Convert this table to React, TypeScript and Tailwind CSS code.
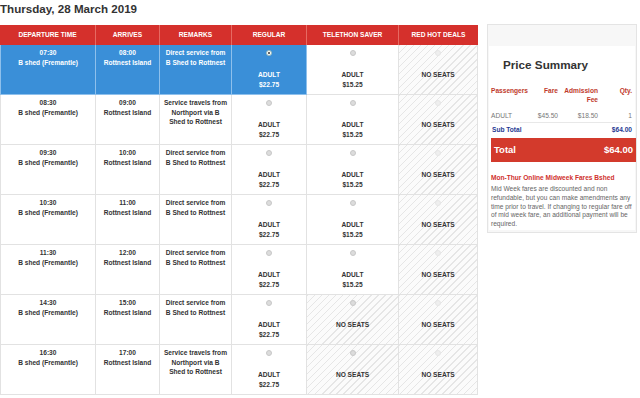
const direct = ['Direct service from', 'B Shed to Rottnest'];
const northport = ['Service travels from', 'Northport via B', 'Shed to Rottnest'];

type Trip = {
  dep: string;
  arr: string;
  remarks: string[];
  telethon: boolean;
  selected?: boolean;
};

const trips: Trip[] = [
  { dep: '07:30', arr: '08:00', remarks: direct, telethon: true, selected: true },
  { dep: '08:30', arr: '09:00', remarks: northport, telethon: true },
  { dep: '09:30', arr: '10:00', remarks: direct, telethon: true },
  { dep: '10:30', arr: '11:00', remarks: direct, telethon: true },
  { dep: '11:30', arr: '12:00', remarks: direct, telethon: true },
  { dep: '14:30', arr: '15:00', remarks: direct, telethon: false },
  { dep: '16:30', arr: '17:00', remarks: northport, telethon: false },
];

const hatch =
  'bg-[#fbfbfb] bg-[repeating-linear-gradient(135deg,#e6e6e6_0px,#e6e6e6_1px,transparent_1px,transparent_5px)]';

const Radio = ({ kind }: { kind: 'on' | 'off' | 'faint' }) => {
  if (kind === 'on')
    return (
      <span className="flex h-[6px] w-[6px] items-center justify-center rounded-full border border-[#9bb] bg-white">
        <span className="h-[2px] w-[2px] rounded-full bg-[#333]" />
      </span>
    );
  if (kind === 'faint')
    return <span className="h-[6px] w-[6px] rounded-full border border-[#e6e6e6] bg-[#efefef]" />;
  return <span className="h-[6px] w-[6px] rounded-full border border-[#c8c8c8] bg-[#dcdcdc]" />;
};

const FareCell = ({ children, radio, className }: { children: React.ReactNode; radio: 'on' | 'off' | 'faint'; className: string }) => (
  <div className={`flex flex-col items-center pt-[5px] ${className}`}>
    <Radio kind={radio} />
    <div className="mt-[14px] text-center">{children}</div>
  </div>
);

const cellBorder = 'border-r border-b border-[#e2e2e2]';

const TripRow = ({ t }: { t: Trip }) => {
  const sel = t.selected;
  const base = sel ? 'bg-[#3a8fd8] text-white border-r border-b border-[#8ec0ec]' : `bg-white text-[#333] ${cellBorder}`;
  return (
    <>
      <div className={`pt-[3px] text-center ${base} border-l`}>
        <div>{t.dep}</div>
        <div>B shed (Fremantle)</div>
      </div>
      <div className={`pt-[3px] text-center ${base}`}>
        <div>{t.arr}</div>
        <div>Rottnest Island</div>
      </div>
      <div className={`pt-[3px] text-center ${base}`}>
        {t.remarks.map((r) => (
          <div key={r} className="whitespace-nowrap">
            {r}
          </div>
        ))}
      </div>
      <FareCell radio={sel ? 'on' : 'off'} className={base}>
        <div>ADULT</div>
        <div>$22.75</div>
      </FareCell>
      {t.telethon ? (
        <FareCell radio="off" className={`bg-white text-[#333] ${cellBorder}`}>
          <div>ADULT</div>
          <div>$15.25</div>
        </FareCell>
      ) : (
        <FareCell radio="off" className={`${hatch} text-[#333] ${cellBorder}`}>
          <div>NO SEATS</div>
        </FareCell>
      )}
      <FareCell radio="faint" className={`${hatch} text-[#333] ${cellBorder}`}>
        <div>NO SEATS</div>
      </FareCell>
    </>
  );
};

const headers = ['DEPARTURE TIME', 'ARRIVES', 'REMARKS', 'REGULAR', 'TELETHON SAVER', 'RED HOT DEALS'];

const PriceSummary = () => (
  <div className="ml-[9px] mt-[24px] h-[209px] w-[150px] border border-[#e4e4e4] bg-[#f7f7f7] px-[1px] pb-[2px] pt-[21px]">
    <div className="h-full bg-white">
      <div className="pl-[14px] pt-[11px] text-[11.7px] font-bold leading-[16px] text-[#333]">Price Summary</div>
      <div className="mt-[13px] grid grid-cols-[1fr_26px_40px_34px] px-[2px] pr-[3px] text-[6.6px] leading-[9px]">
        <div className="font-bold text-[#c0392b]">Passengers</div>
        <div className="text-right font-bold text-[#c0392b]">Fare</div>
        <div className="pl-[5px] text-right font-bold text-[#c0392b]">Admission Fee</div>
        <div className="text-right font-bold text-[#c0392b]">Qty.</div>
        <div className="mt-[7px] border-b border-[#e8e8e8] pb-[2px] text-[#777]">ADULT</div>
        <div className="mt-[7px] border-b border-[#e8e8e8] pb-[2px] text-right text-[#777]">$45.50</div>
        <div className="mt-[7px] border-b border-[#e8e8e8] pb-[2px] text-right text-[#777]">$18.50</div>
        <div className="mt-[7px] border-b border-[#e8e8e8] pb-[2px] text-right text-[#777]">1</div>
      </div>
      <div className="flex justify-between px-[3px] pt-[2px] text-[6.6px] font-bold leading-[9px] text-[#1f3a93]">
        <span>Sub Total</span>
        <span>$64.00</span>
      </div>
      <div className="ml-[2px] mr-[-1px] mt-[4px] flex h-[24px] items-center justify-between bg-[#d33a2c] px-[3px] text-[9.5px] font-bold text-white">
        <span>Total</span>
        <span>$64.00</span>
      </div>
      <div className="px-[2px] pt-[11px] text-[6.6px] font-bold leading-[9px] text-[#d0312d]">
        Mon-Thur Online Midweek Fares Bshed
      </div>
      <div className="px-[2px] pt-[3px] text-[6.6px] leading-[8.8px] text-[#666]">
        <div className="whitespace-nowrap">Mid Week fares are discounted and non</div>
        <div className="whitespace-nowrap">refundable, but you can make amendments any</div>
        <div className="whitespace-nowrap">time prior to travel. If changing to regular fare off</div>
        <div className="whitespace-nowrap">of mid week fare, an additional payment will be</div>
        <div className="whitespace-nowrap">required.</div>
      </div>
    </div>
  </div>
);

export default function App() {
  return (
    <div className="flex h-[398px] w-[640px] overflow-hidden bg-white font-['Liberation_Sans',Arial,sans-serif]">
      <div className="w-[478px]">
        <div className="h-[25px] pt-[1px] text-[11.6px] font-bold leading-[16px] text-[#333]">Thursday, 28 March 2019</div>
        <div className="grid grid-cols-[96px_64px_72px_75px_92px_79px] grid-rows-[20px_repeat(7,50px)] text-[6.6px] font-bold leading-[9.5px]">
          {headers.map((h, i) => (
            <div
              key={h}
              className={`flex items-center justify-center bg-[#d5302c] text-white ${i < 5 ? 'border-r border-[#e66a62]' : ''}`}
            >
              {h}
            </div>
          ))}
          {trips.map((t) => (
            <TripRow key={t.dep} t={t} />
          ))}
        </div>
      </div>
      <PriceSummary />
    </div>
  );
}
